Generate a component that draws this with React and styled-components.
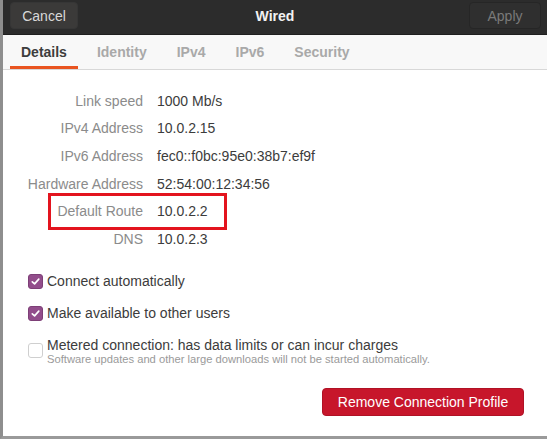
import React from "react";
import styled, { createGlobalStyle } from "styled-components";

const Global = createGlobalStyle`
  html, body { margin: 0; padding: 0; background: #ffffff; }
  body { font-family: "Liberation Sans", Arial, sans-serif; }
  * { box-sizing: border-box; }
`;

const Window = styled.div`
  width: 547px;
  height: 439px;
  display: flex;
  flex-direction: column;
  background: #ffffff;
  border-left: 3px solid #8e8e8e;
  border-bottom: 3px solid #9a9a9a;
  overflow: hidden;
`;

const HeaderBar = styled.div`
  height: 35px;
  flex: none;
  background: #2c2c2c;
  display: flex;
  align-items: center;
  justify-content: space-between;
  padding: 0 6px 3px 7px;
  position: relative;
  border-bottom: 1px solid #1f1f1f;
`;

const HeaderButton = styled.button`
  height: 27px;
  width: ${(p) => p.$w}px;
  border-radius: 4px;
  border: 1px solid ${(p) => (p.$disabled ? "#262626" : "#363636")};
  background: ${(p) => (p.$disabled ? "#2f2f2f" : "#3b3a39")};
  color: ${(p) => (p.$disabled ? "#7a7a7a" : "#d8d8d8")};
  font-family: inherit;
  font-size: 14px;
  padding: 0;
`;

const Title = styled.div`
  position: absolute;
  left: 0;
  right: 0;
  top: 0;
  height: 32px;
  display: flex;
  align-items: center;
  justify-content: center;
  color: #f2f2f2;
  font-weight: 700;
  font-size: 14px;
  pointer-events: none;
`;

const TabBar = styled.div`
  height: 35px;
  flex: none;
  background: #f8f8f8;
  border-bottom: 1px solid #d8d8d8;
  display: flex;
  align-items: stretch;
  gap: 8px;
  padding-left: 7px;
`;

const Tab = styled.div`
  padding: 3px 11px 0;
  display: flex;
  align-items: center;
  font-size: 14px;
  font-weight: 700;
  color: ${(p) => (p.$active ? "#3d3d3d" : "#a9a9a9")};
  border-bottom: 3px solid ${(p) => (p.$active ? "#e95420" : "transparent")};
`;

const Body = styled.div`
  flex: 1;
  display: flex;
  flex-direction: column;
  padding-top: 17px;
`;

const InfoGrid = styled.div`
  display: grid;
  grid-template-columns: 140px 1fr;
  column-gap: 14px;
  grid-auto-rows: 27.6px;
  align-items: center;
`;

const Label = styled.div`
  text-align: right;
  color: #8b8b8b;
  font-size: 14px;
  white-space: nowrap;
  position: relative;
`;

const Value = styled.div`
  color: #3c3c3c;
  font-size: 14px;
  white-space: nowrap;
`;

const Highlight = styled.div`
  position: absolute;
  left: 45px;
  top: -10px;
  width: 179px;
  height: 37px;
  border: 3px solid #e3141e;
  pointer-events: none;
`;

const Options = styled.div`
  display: flex;
  flex-direction: column;
  gap: 13px;
  padding-left: 25px;
  margin-top: 19px;
`;

const Option = styled.label`
  display: flex;
  align-items: center;
  gap: 4px;
  min-height: 19px;
`;

const Box = styled.span`
  width: 15px;
  height: 15px;
  flex: none;
  border-radius: 3px;
  display: flex;
  align-items: center;
  justify-content: center;
  background: ${(p) => (p.$checked ? "#924d8b" : "#ffffff")};
  border: 1px solid ${(p) => (p.$checked ? "#7d3f77" : "#cfcfcf")};
`;

const OptionText = styled.div`
  display: flex;
  flex-direction: column;
`;

const OptionTitle = styled.span`
  font-size: 14px;
  color: #3c3c3c;
  line-height: 18px;
`;

const OptionHint = styled.span`
  font-size: 11.2px;
  color: #9a9a9a;
  line-height: 11px;
`;

const Footer = styled.div`
  display: flex;
  justify-content: flex-end;
  padding-right: 23px;
  margin-top: 23px;
`;

const DangerButton = styled.button`
  width: 202px;
  height: 28px;
  border-radius: 4px;
  border: 1px solid #b01225;
  background: #c7162b;
  color: #ffffff;
  font-family: inherit;
  font-size: 14px;
  padding: 0;
`;

const Check = () => (
  <svg width="11" height="11" viewBox="0 0 12 12">
    <path d="M2.5 6.3 L5 8.6 L9.6 3.4" fill="none" stroke="#fff" strokeWidth="1.8" strokeLinecap="round" strokeLinejoin="round" />
  </svg>
);

const rows = [
  ["Link speed", "1000 Mb/s"],
  ["IPv4 Address", "10.0.2.15"],
  ["IPv6 Address", "fec0::f0bc:95e0:38b7:ef9f"],
  ["Hardware Address", "52:54:00:12:34:56"],
  ["Default Route", "10.0.2.2", true],
  ["DNS", "10.0.2.3"],
];

export default function App() {
  return (
    <>
      <Global />
      <Window>
        <HeaderBar>
          <HeaderButton $w={68}>Cancel</HeaderButton>
          <Title>Wired</Title>
          <HeaderButton $w={72} $disabled>Apply</HeaderButton>
        </HeaderBar>
        <TabBar>
          <Tab $active>Details</Tab>
          <Tab>Identity</Tab>
          <Tab>IPv4</Tab>
          <Tab>IPv6</Tab>
          <Tab>Security</Tab>
        </TabBar>
        <Body>
          <InfoGrid>
            {rows.map(([l, v, hl]) => (
              <React.Fragment key={l}>
                <Label>
                  {hl && <Highlight />}
                  {l}
                </Label>
                <Value>{v}</Value>
              </React.Fragment>
            ))}
          </InfoGrid>
          <Options>
            <Option>
              <Box $checked><Check /></Box>
              <OptionText><OptionTitle>Connect automatically</OptionTitle></OptionText>
            </Option>
            <Option>
              <Box $checked><Check /></Box>
              <OptionText><OptionTitle>Make available to other users</OptionTitle></OptionText>
            </Option>
            <Option>
              <Box />
              <OptionText>
                <OptionTitle>Metered connection: has data limits or can incur charges</OptionTitle>
                <OptionHint>Software updates and other large downloads will not be started automatically.</OptionHint>
              </OptionText>
            </Option>
          </Options>
          <Footer>
            <DangerButton>Remove Connection Profile</DangerButton>
          </Footer>
        </Body>
      </Window>
    </>
  );
}
